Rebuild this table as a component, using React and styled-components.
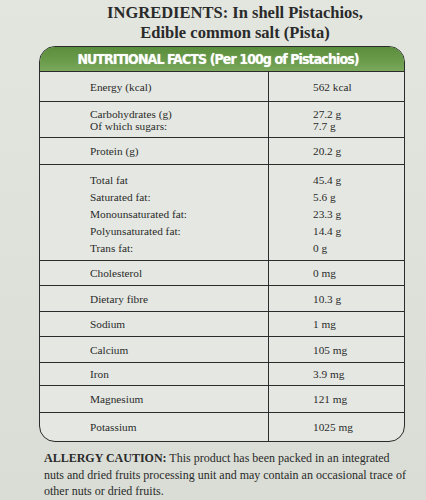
import React from 'react';
import styled, { createGlobalStyle } from 'styled-components';

const GlobalStyle = createGlobalStyle`
    html, body {
        margin: 0;
        padding: 0;
    }
    body {
        width: 426px;
        height: 500px;
        overflow: hidden;
        background: linear-gradient(180deg, #e2e6df 0%, #dde1da 55%, #d9ddd5 100%);
        font-family: "Liberation Serif", "Times New Roman", serif;
        color: #262626;
    }
`;

const Page = styled.div`
    display: flex;
    flex-direction: column;
    padding: 3px 23px 0 39px;
`;

const Ingredients = styled.p`
    margin: 0 0 0 28px;
    font-size: 16.5px;
    font-weight: 700;
    line-height: 20px;
    text-align: center;
    color: #2a2a2a;
`;

const Table = styled.div`
    margin-top: 3px;
    width: 364px;
    border: 1.5px solid #2b2b2b;
    border-radius: 16px;
    overflow: hidden;
    background: #e5e8e2;
`;

const Header = styled.div`
    height: 25px;
    box-sizing: border-box;
    display: flex;
    align-items: center;
    justify-content: center;
    background: linear-gradient(180deg, #5a8d3c 0%, #6b9c4c 60%, #7aa85c 100%);
    border-bottom: 1.5px solid #2b2b2b;
`;

const HeaderText = styled.span`
    font-family: "DejaVu Sans Condensed", "DejaVu Sans", sans-serif;
    font-weight: 700;
    font-size: 14px;
    letter-spacing: -0.9px;
    color: #ffffff;
    text-shadow: 0 0 1px rgba(255, 255, 255, 0.6);
    margin-left: -8px;
`;

const Row = styled.div`
    display: grid;
    grid-template-columns: 228px 1fr;
    height: ${(p) => p.height}px;
    box-sizing: border-box;

    &:not(:last-child) {
        border-bottom: 1.5px solid #2b2b2b;
    }
`;

const Cell = styled.div`
    display: flex;
    flex-direction: column;
    justify-content: ${(p) => (p.top ? 'flex-start' : 'center')};
    padding-top: ${(p) => (p.top ? '7px' : '0')};
    padding-left: ${(p) => (p.value ? '44px' : '50px')};
    border-left: ${(p) => (p.value ? '1.5px solid #2b2b2b' : 'none')};
    font-size: 11.3px;
    line-height: ${(p) => p.lh || 12}px;
    color: #2a2a2a;
`;

const Allergy = styled.p`
    margin: 8px 0 0 5px;
    font-size: 12px;
    line-height: 16.5px;
    color: #2a2a2a;
    white-space: nowrap;
`;

const Strong = styled.b`
    font-weight: 700;
`;

const rows = [
    { h: 30, label: ['Energy (kcal)'], value: ['562 kcal'] },
    { h: 36, label: ['Carbohydrates (g)', 'Of which sugars:'], value: ['27.2 g', '7.7 g'] },
    { h: 27, label: ['Protein (g)'], value: ['20.2 g'] },
    {
        h: 96,
        lh: 17,
        top: true,
        label: ['Total fat', 'Saturated fat:', 'Monounsaturated fat:', 'Polyunsaturated fat:', 'Trans fat:'],
        value: ['45.4 g', '5.6 g', '23.3 g', '14.4 g', '0 g'],
    },
    { h: 25, label: ['Cholesterol'], value: ['0 mg'] },
    { h: 26, label: ['Dietary fibre'], value: ['10.3 g'] },
    { h: 25, label: ['Sodium'], value: ['1 mg'] },
    { h: 26, label: ['Calcium'], value: ['105 mg'] },
    { h: 23, label: ['Iron'], value: ['3.9 mg'] },
    { h: 27, label: ['Magnesium'], value: ['121 mg'] },
    { h: 28, label: ['Potassium'], value: ['1025 mg'] },
];

function App() {
    return (
        <Page>
            <GlobalStyle />
            <Ingredients>
                INGREDIENTS: In shell Pistachios,
                <br />
                Edible common salt (Pista)
            </Ingredients>
            <Table>
                <Header>
                    <HeaderText>NUTRITIONAL FACTS (Per 100g of Pistachios)</HeaderText>
                </Header>
                {rows.map((r, i) => (
                    <Row key={i} height={r.h}>
                        <Cell top={r.top} lh={r.lh}>
                            {r.label.map((t) => (
                                <span key={t}>{t}</span>
                            ))}
                        </Cell>
                        <Cell value top={r.top} lh={r.lh}>
                            {r.value.map((t) => (
                                <span key={t}>{t}</span>
                            ))}
                        </Cell>
                    </Row>
                ))}
            </Table>
            <Allergy>
                <Strong>ALLERGY CAUTION:</Strong> This product has been packed in an integrated
                <br />
                nuts and dried fruits processing unit and may contain an occasional trace of
                <br />
                other nuts or dried fruits.
            </Allergy>
        </Page>
    );
}

export default App;
